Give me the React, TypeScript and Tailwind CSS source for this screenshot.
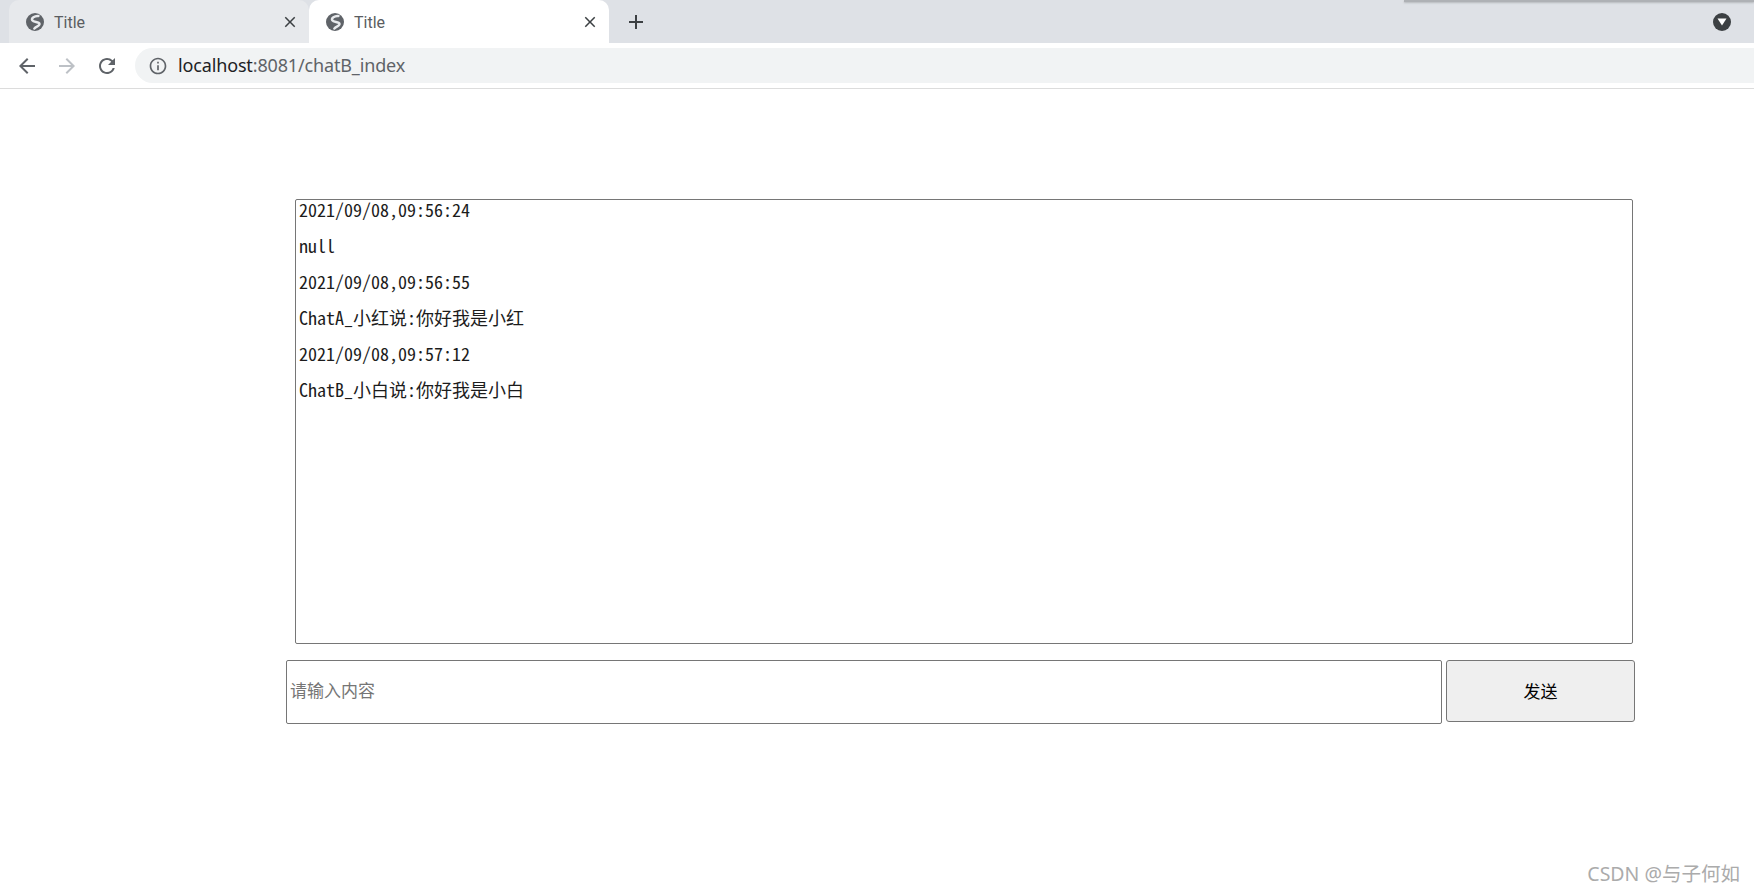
import { MdAdd, MdArrowBack, MdArrowForward, MdClose, MdInfoOutline, MdRefresh } from 'react-icons/md';

const messages = [
  '2021/09/08,09:56:24',
  'null',
  '2021/09/08,09:56:55',
  'ChatA_小红说:你好我是小红',
  '2021/09/08,09:57:12',
  'ChatB_小白说:你好我是小白',
];

const Globe = () => (
  <svg width="18" height="18" viewBox="0 0 18 18" className="shrink-0">
    <circle cx="9" cy="9" r="9" fill="#5f6368" />
    <path
      d="M12.5 3C8.5 2.6 5 5.2 6.3 7.4 7.6 9.6 13 8.4 13.5 10.8 14 13.2 10 13 8.3 15.6"
      fill="none"
      stroke="#e8eaed"
      strokeWidth="2.4"
      strokeLinecap="round"
    />
  </svg>
);

const Tab = ({ active }: { active?: boolean }) => (
  <div
    className={`flex h-[43px] w-[300px] items-center pl-[17px] pr-[10px] ${
      active ? 'rounded-t-[10px] bg-white' : 'rounded-t-[10px] bg-[#e7e9ec]'
    }`}
  >
    <Globe />
    <span className="ml-[10px] mt-[2px] flex-1 font-['Roboto',sans-serif] text-[16px] text-[#5a5d61]">Title</span>
    <MdClose size={18} className="text-[#3c4043]" />
  </div>
);

const App = () => {
  return (
    <div className="relative flex h-[893px] w-[1754px] flex-col overflow-hidden bg-white">
      <div className="relative flex h-[43px] shrink-0 items-center bg-[#dee1e6] pl-[9px]">
        <Tab />
        <Tab active />
        <MdAdd size={24} className="ml-[15px] text-[#3c4043]" />
        <div className="ml-auto mr-[23px] flex h-[18px] w-[18px] items-center justify-center rounded-full bg-[#3c4043]">
          <svg width="10" height="8" viewBox="0 0 10 8">
            <path d="M0.5 0.5h9L5 7.5z" fill="#fff" />
          </svg>
        </div>
        <div className="absolute right-0 top-0 h-[2px] w-[350px] bg-[#aeb1b5] shadow-[0_1px_2px_#b4b7bb]" />
      </div>

      <div className="flex h-[46px] shrink-0 items-center border-b border-[#dcdcdc] bg-white pl-[15px]">
        <MdArrowBack size={24} className="text-[#5f6368]" />
        <MdArrowForward size={24} className="ml-[16px] text-[#bdc1c6]" />
        <MdRefresh size={24} className="ml-[16px] text-[#5f6368]" />
        <div className="ml-[16px] flex h-[35px] flex-1 items-center rounded-l-[18px] bg-[#f1f3f4] pl-[13px]">
          <MdInfoOutline size={20} className="text-[#5f6368]" />
          <span className="ml-[10px] font-['Noto_Sans',sans-serif] text-[18px] tracking-[-0.15px] text-[#202124]">
            localhost<span className="text-[#5f6368]">:8081/chatB_index</span>
          </span>
        </div>
      </div>

      <main className="flex flex-col pl-[286px] pt-[110px]">
        <div className="ml-[9px] h-[445px] w-[1338px] rounded-[2px] border border-[#767676] pl-[3px] font-['Noto_Sans_Mono_CJK_SC','Liberation_Mono',monospace] text-[18px] text-[#1c1c1c]">
          {messages.map((line, i) => (
            <p key={i} className="mb-[12px] h-[24px] leading-[18px]">
              {line}
            </p>
          ))}
        </div>

        <div className="mt-[16px] flex items-start gap-[4px]">
          <input
            placeholder="请输入内容"
            className="h-[64px] w-[1156px] rounded-[2px] border border-[#767676] pb-[6px] pl-[3px] font-['Noto_Sans_CJK_SC',sans-serif] text-[17px] outline-none placeholder:text-[#757575]"
          />
          <button className="h-[62px] w-[189px] rounded-[3px] border border-[#767676] bg-[#efefef] font-['Noto_Sans_CJK_SC',sans-serif] text-[17px] text-black">
            发送
          </button>
        </div>
      </main>

      <div className="absolute bottom-[5px] right-[14px] font-['Noto_Sans','Noto_Sans_CJK_SC',sans-serif] text-[19.5px] text-[#ababab]">
        CSDN @与子何如
      </div>
    </div>
  );
};

export default App;
